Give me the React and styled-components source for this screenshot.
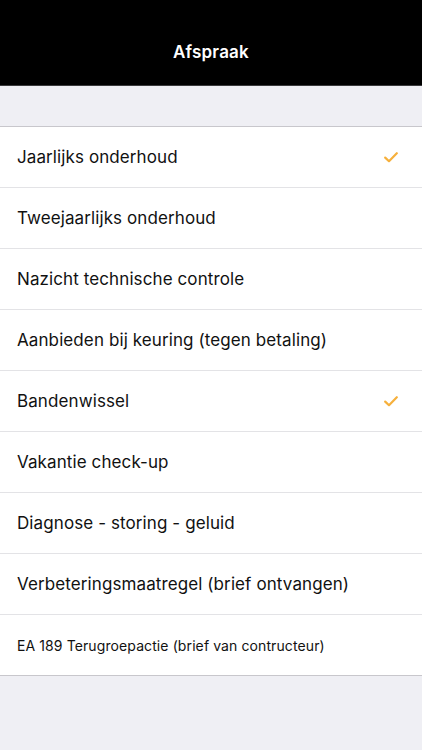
import React from 'react'
import styled, { createGlobalStyle } from 'styled-components'

const GlobalStyle = createGlobalStyle`
  html, body {
    margin: 0;
    padding: 0;
    background: #efeff4;
  }
  body {
    font-family: Inter, 'Noto Sans', 'Liberation Sans', sans-serif;
    -webkit-font-smoothing: antialiased;
  }
`

const Screen = styled.div`
  width: 422px;
  min-height: 750px;
  background: #efeff4;
  display: flex;
  flex-direction: column;
`

const NavBar = styled.header`
  height: 86px;
  background: #000;
  border-bottom: 1px solid #3a3a3c;
  box-sizing: border-box;
  display: flex;
  align-items: flex-end;
  justify-content: center;
  padding-bottom: 23px;
`

const Title = styled.h1`
  margin: 0;
  color: #fff;
  font-size: 17px;
  font-weight: 600;
  letter-spacing: 0.2px;
`

const Spacer = styled.div`
  height: 40px;
`

const List = styled.ul`
  list-style: none;
  margin: 0;
  padding: 0;
  background: #fff;
  border-top: 1px solid #c8c7cc;
  border-bottom: 1px solid #c8c7cc;
`

const Row = styled.li`
  height: 61px;
  box-sizing: border-box;
  display: flex;
  align-items: center;
  justify-content: space-between;
  padding: 0 24px 0 17px;
  border-bottom: 1px solid #e3e3e6;

  &:last-child {
    border-bottom: none;
    height: 60px;
  }
`

const Label = styled.span`
  color: #111;
  font-size: ${p => (p.$small ? '14px' : '17px')};
  letter-spacing: 0.1px;
`

const Check = () => (
  <svg width="14" height="11" viewBox="0 0 14 11" fill="none">
    <path
      d="M1.2 5.6 L5 9.2 L12.8 1.2"
      stroke="#f6b03c"
      strokeWidth="2.2"
      strokeLinecap="round"
      strokeLinejoin="round"
    />
  </svg>
)

const items = [
  { label: 'Jaarlijks onderhoud', checked: true },
  { label: 'Tweejaarlijks onderhoud' },
  { label: 'Nazicht technische controle' },
  { label: 'Aanbieden bij keuring (tegen betaling)' },
  { label: 'Bandenwissel', checked: true },
  { label: 'Vakantie check-up' },
  { label: 'Diagnose - storing - geluid' },
  { label: 'Verbeteringsmaatregel (brief ontvangen)' },
  { label: 'EA 189 Terugroepactie (brief van contructeur)', small: true }
]

export default function App() {
  return (
    <Screen>
      <GlobalStyle />
      <NavBar>
        <Title>Afspraak</Title>
      </NavBar>
      <Spacer />
      <List>
        {items.map(item => (
          <Row key={item.label}>
            <Label $small={item.small}>{item.label}</Label>
            {item.checked && <Check />}
          </Row>
        ))}
      </List>
    </Screen>
  )
}
